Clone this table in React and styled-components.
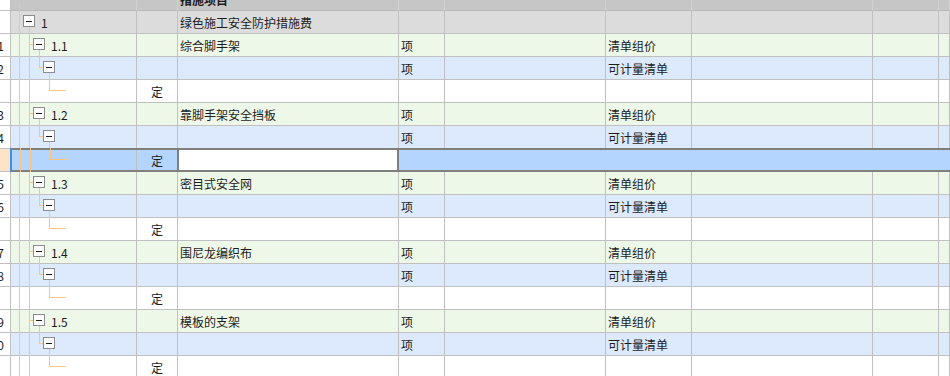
import React from 'react';
import styled, { createGlobalStyle } from 'styled-components';

const GlobalStyle = createGlobalStyle`
  html, body { margin: 0; padding: 0; background: #fff; overflow: hidden; }
  body {
    font-family: "Noto Sans CJK SC", "Noto Sans", sans-serif;
    font-size: 12px;
    color: #1c1c1c;
  }
`;

const GRID = '#c0c0c0';
const LINE = '#fcc57a';

const BG = {
  header: '#c6c6c6',
  group: '#dcdcdc',
  item: '#eef8e9',
  sub: '#dde9fc',
  quota: '#ffffff',
};

const Sheet = styled.div`
  width: 950px;
  height: 376px;
  overflow: hidden;
  display: flex;
  flex-direction: column;
`;

const Row = styled.div`
  display: flex;
  flex: 0 0 auto;
  height: 23px;
  background: ${p => BG[p.$kind]};
  margin-top: ${p => (p.$kind === 'header' ? '-12px' : '0')};
  font-weight: ${p => (p.$kind === 'header' ? 'bold' : 'normal')};
`;

const Cell = styled.div`
  box-sizing: border-box;
  flex: ${p => (p.$w ? `0 0 ${p.$w}px` : '1 1 auto')};
  height: 23px;
  border-right: 1px solid ${p => p.$line || GRID};
  border-bottom: 1px solid ${p => p.$bottom || GRID};
  display: flex;
  align-items: center;
  justify-content: ${p => (p.$align === 'center' ? 'center' : 'flex-start')};
  padding: 0 2px;
  white-space: nowrap;
  overflow: hidden;
`;

const NumCell = styled.div`
  box-sizing: border-box;
  flex: 0 0 11px;
  height: 23px;
  background: #fff;
  border-right: 1px solid ${GRID};
  border-bottom: 1px solid ${GRID};
  display: flex;
  align-items: center;
  justify-content: flex-end;
  padding-right: 6px;
  overflow: hidden;
  white-space: nowrap;
`;

const TreeCell = styled.div`
  box-sizing: border-box;
  position: relative;
  flex: 0 0 ${p => p.$w}px;
  height: ${p => p.$h}px;
  border-right: 1px solid ${p => p.$line || GRID};
  border-bottom: ${p => (p.$noBottom ? 'none' : `1px solid ${p.$bottom || GRID}`)};
  display: flex;
  align-items: center;
  padding-left: ${p => p.$indent}px;
  white-space: nowrap;
`;

const Toggle = styled.span`
  box-sizing: border-box;
  position: relative;
  z-index: 1;
  flex: 0 0 12px;
  width: 12px;
  height: 12px;
  align-self: flex-start;
  margin-top: 4px;
  background: #fff;
  border: 1px solid #8c8c8c;
  &::after {
    content: '';
    display: ${p => (p.$empty ? 'none' : 'block')};
    position: absolute;
    left: 2px;
    top: 5px;
    width: 6px;
    height: 1px;
    background: #1c1c1c;
  }
`;

const Code = styled.span`
  margin-left: 6px;
  position: relative;
  z-index: 1;
`;

const Lines = styled.svg`
  position: absolute;
  left: 0;
  top: ${p => p.$top}px;
  pointer-events: none;
`;

const SelRow = styled.div`
  display: flex;
  flex: 0 0 auto;
  height: 24px;
  margin-top: -1px;
  position: relative;
`;

const SelNum = styled.div`
  box-sizing: border-box;
  flex: 0 0 10px;
  height: 24px;
  background: #fde4c6;
  border-top: 1px solid ${GRID};
  border-bottom: 1px solid ${GRID};
`;

const Marker = styled.div`
  flex: 0 0 2px;
  height: 24px;
  background: #3f8fe6;
`;

const SelBody = styled.div`
  box-sizing: border-box;
  flex: 1 1 auto;
  height: 24px;
  display: flex;
  background: #b4d5fe;
  border-top: 2px solid #7f7f7f;
  border-bottom: 2px solid #7f7f7f;
`;

const SelCell = styled.div`
  box-sizing: border-box;
  flex: ${p => (p.$w ? `0 0 ${p.$w}px` : '1 1 auto')};
  height: 20px;
  display: flex;
  align-items: center;
  justify-content: ${p => (p.$align === 'center' ? 'center' : 'flex-start')};
  white-space: nowrap;
`;

const EditCell = styled.div`
  box-sizing: border-box;
  flex: 0 0 222px;
  height: 20px;
  background: #fff;
  border-left: 2px solid #7f7f7f;
  border-right: 2px solid #7f7f7f;
`;

const A = 8.5, B = 18.5, L1 = 28.5, L2 = 38.5;

function segments(level, h, mid) {
  if (level === 'header') return [[A, 16, A, h]];
  const s = [[A, 0, A, h]];
  if (level === 0) s.push([B, 16, B, h]);
  else s.push([B, 0, B, h]);
  if (level === 1) s.push([18, mid, 22, mid], [L1, 16, L1, h]);
  if (level === 2) s.push([L1, 0, L1, mid], [28, mid, 32, mid], [L2, 16, L2, h]);
  if (level === 3) s.push([L2, 0, L2, mid], [38, mid, 55, mid]);
  return s;
}

function TreeLines({ level, h, mid, top = 0 }) {
  return (
    <Lines $top={top} width="126" height={h} shapeRendering="crispEdges">
      {segments(level, h, mid).map(([x1, y1, x2, y2], i) => (
        <line key={i} x1={x1} y1={y1} x2={x2} y2={y2} stroke={LINE} strokeWidth="1" />
      ))}
    </Lines>
  );
}

const WIDTHS = { ding: 41, name: 221, unit: 46, c5: 161, type: 86, c7: 181, c8: 66 };

const items = [
  ['1.1', '综合脚手架'],
  ['1.2', '靠脚手架安全挡板'],
  ['1.3', '密目式安全网'],
  ['1.4', '围尼龙编织布'],
  ['1.5', '模板的支架'],
];

const rows = [{ kind: 'group', level: 0, code: '1', name: '绿色施工安全防护措施费' }];
items.forEach(([code, name], i) => {
  rows.push({ kind: 'item', level: 1, num: String(i * 2 + 1), code, name, unit: '项', type: '清单组价' });
  rows.push({ kind: 'sub', level: 2, num: String(i * 2 + 2), unit: '项', type: '可计量清单' });
  rows.push({ kind: 'quota', level: 3, ding: '定', selected: i === 1 });
});

const indentFor = level => 12 + level * 10;

function GridRow({ row }) {
  const isHeader = row.kind === 'header';
  const line = isHeader ? '#d2d2d2' : GRID;
  const bottom = isHeader ? '#b8b8b8' : GRID;
  return (
    <Row $kind={row.kind}>
      <NumCell>{row.num}</NumCell>
      <TreeCell $w={126} $h={23} $indent={isHeader ? 3 : indentFor(row.level)} $line={line} $bottom={bottom}>
        <TreeLines level={isHeader ? 'header' : row.level} h={23} mid={10.5} />
        {row.level < 3 && <Toggle $empty={isHeader} />}
        {row.code && <Code>{row.code}</Code>}
      </TreeCell>
      <Cell $w={WIDTHS.ding} $align="center" $line={line} $bottom={bottom}>{row.ding}</Cell>
      <Cell $w={WIDTHS.name} $line={line} $bottom={bottom}>{row.name}</Cell>
      <Cell $w={WIDTHS.unit} $line={line} $bottom={bottom}>{row.unit}</Cell>
      <Cell $w={WIDTHS.c5} $line={line} $bottom={bottom} />
      <Cell $w={WIDTHS.type} $line={line} $bottom={bottom}>{row.type}</Cell>
      <Cell $w={WIDTHS.c7} $line={line} $bottom={bottom} />
      <Cell $w={WIDTHS.c8} $line={line} $bottom={bottom} />
      <Cell $line={line} $bottom={bottom} />
    </Row>
  );
}

function SelectedRow({ row }) {
  return (
    <SelRow>
      <SelNum />
      <Marker />
      <SelBody>
        <TreeCell $w={125} $h={20} $indent={indentFor(row.level) - 1} $noBottom>
          <TreeLines level={row.level} h={24} mid={11.5} top={-2} />
        </TreeCell>
        <SelCell $w={40} $align="center">{row.ding}</SelCell>
        <EditCell />
        <SelCell />
      </SelBody>
    </SelRow>
  );
}

export default function App() {
  return (
    <>
      <GlobalStyle />
      <Sheet>
        <GridRow row={{ kind: 'header', name: '措施项目' }} />
        {rows.map((r, i) =>
          r.selected ? <SelectedRow key={i} row={r} /> : <GridRow key={i} row={r} />
        )}
      </Sheet>
    </>
  );
}
